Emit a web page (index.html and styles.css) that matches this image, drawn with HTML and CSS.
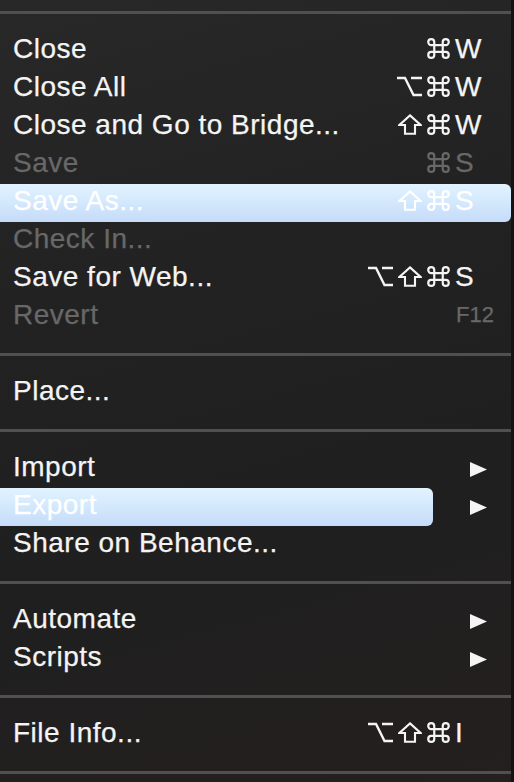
FILE: index.html
```html
<!DOCTYPE html>
<html>
<head>
<meta charset="utf-8">
<link rel="stylesheet" href="styles.css">
</head>
<body>
<svg class="defs" width="0" height="0" aria-hidden="true">
  <defs>
    <symbol id="cmd" viewBox="0 0 23 21">
      <path d="M7.25 4.1V16.9M15.75 4.1V16.9M4.25 7.1H18.75M4.25 13.9H18.75M7.25 4.1A3 3 0 1 0 4.25 7.1M15.75 4.1A3 3 0 1 1 18.75 7.1M4.25 13.9A3 3 0 1 0 7.25 16.9M18.75 13.9A3 3 0 1 1 15.75 16.9" fill="none" stroke="currentColor" stroke-width="2.2"/>
    </symbol>
    <symbol id="opt" viewBox="0 0 25 21">
      <path d="M0 2H8L16.5 19H25M14 2H25" fill="none" stroke="currentColor" stroke-width="2.4"/>
    </symbol>
    <symbol id="shift" viewBox="0 0 24 21">
      <path d="M12 1.4L22.6 11H17V19.8H7V11H1.4Z" fill="none" stroke="currentColor" stroke-width="2.1" stroke-linejoin="miter"/>
    </symbol>
    <symbol id="tri" viewBox="0 0 17 15">
      <path d="M0 0L17 7.5L0 15Z" fill="currentColor"/>
    </symbol>
  </defs>
</svg>
<div class="menu">
  <div class="sep first"><div class="line"></div></div>
  <div class="item"><span class="label">Close</span><span class="mods" aria-label="Command"><svg class="g cmd"><use href="#cmd"/></svg></span><span class="key">W</span></div>
  <div class="item"><span class="label">Close All</span><span class="mods" aria-label="Option Command"><svg class="g opt"><use href="#opt"/></svg><svg class="g cmd"><use href="#cmd"/></svg></span><span class="key">W</span></div>
  <div class="item"><span class="label">Close and Go to Bridge...</span><span class="mods" aria-label="Shift Command"><svg class="g shift"><use href="#shift"/></svg><svg class="g cmd"><use href="#cmd"/></svg></span><span class="key">W</span></div>
  <div class="item disabled"><span class="label">Save</span><span class="mods" aria-label="Command"><svg class="g cmd"><use href="#cmd"/></svg></span><span class="key">S</span></div>
  <div class="item selected"><span class="label">Save As...</span><span class="mods" aria-label="Shift Command"><svg class="g shift"><use href="#shift"/></svg><svg class="g cmd"><use href="#cmd"/></svg></span><span class="key">S</span></div>
  <div class="item disabled"><span class="label">Check In...</span></div>
  <div class="item"><span class="label">Save for Web...</span><span class="mods" aria-label="Option Shift Command"><svg class="g opt"><use href="#opt"/></svg><svg class="g shift"><use href="#shift"/></svg><svg class="g cmd"><use href="#cmd"/></svg></span><span class="key">S</span></div>
  <div class="item disabled"><span class="label">Revert</span><span class="mods"></span><span class="key fkey">F12</span></div>
  <div class="sep"><div class="line"></div></div>
  <div class="item"><span class="label">Place...</span></div>
  <div class="sep"><div class="line"></div></div>
  <div class="item"><span class="label">Import</span><span class="sub"><svg class="tri"><use href="#tri"/></svg></span></div>
  <div class="item sub-selected"><span class="label">Export</span><span class="sub"><svg class="tri"><use href="#tri"/></svg></span></div>
  <div class="item"><span class="label">Share on Behance...</span></div>
  <div class="sep"><div class="line"></div></div>
  <div class="item"><span class="label">Automate</span><span class="sub"><svg class="tri"><use href="#tri"/></svg></span></div>
  <div class="item"><span class="label">Scripts</span><span class="sub"><svg class="tri"><use href="#tri"/></svg></span></div>
  <div class="sep"><div class="line"></div></div>
  <div class="item"><span class="label">File Info...</span><span class="mods" aria-label="Option Shift Command"><svg class="g opt"><use href="#opt"/></svg><svg class="g shift"><use href="#shift"/></svg><svg class="g cmd"><use href="#cmd"/></svg></span><span class="key">I</span></div>
  <div class="sep"><div class="line"></div></div>
</div>
</body>
</html>
```

FILE: styles.css
```css
html, body {
  margin: 0;
  padding: 0;
  background: #1c1a1a;
}

.defs {
  position: absolute;
  width: 0;
  height: 0;
  overflow: hidden;
}

.menu {
  width: 511px;
  height: 782px;
  overflow: hidden;
  border-right: 3px solid #141212;
  background: linear-gradient(165deg, #282828 0%, #222222 35%, #1f1f1f 65%, #251f1f 100%);
  font-family: "Liberation Sans", Arial, sans-serif;
  color: #f4f4f4;
}

.sep {
  padding: 17px 0 18px;
}

.sep.first {
  padding-top: 11px;
}

.line {
  height: 3px;
  background: #505050;
}

.item {
  display: flex;
  height: 38px;
  box-sizing: border-box;
  padding-bottom: 4px;
  font-size: 28px;
  line-height: 34px;
  letter-spacing: 0.5px;
  white-space: nowrap;
  -webkit-text-stroke: 0.25px currentColor;
}

.label {
  flex: 1;
  padding-left: 13px;
}

.mods {
  display: flex;
  justify-content: flex-end;
  align-items: flex-start;
  gap: 5px;
  padding-top: 6px;
  padding-right: 5px;
}

.g {
  display: block;
  height: 21px;
}

.g.cmd { width: 23px; }
.g.opt { width: 25px; }
.g.shift { width: 24px; }

.key {
  width: 56px;
  letter-spacing: 0;
}

.fkey {
  font-size: 22px;
  padding-left: 1px;
  box-sizing: border-box;
}

.disabled {
  color: #686868;
}

.selected {
  background: linear-gradient(180deg, #e2f3ff 0%, #d3e8fd 50%, #c5dbf8 100%);
  border-radius: 0 6px 6px 0;
  color: #ffffff;
}

.sub {
  width: 78px;
  display: flex;
  align-items: center;
  padding-top: 4px;
  box-sizing: border-box;
}

.tri {
  display: block;
  margin-left: 37px;
  width: 17px;
  height: 15px;
  color: #f4f4f4;
}

.sub-selected .label {
  background: linear-gradient(180deg, #e2f3ff 0%, #d3e8fd 50%, #c5dbf8 100%);
  border-radius: 0 6px 6px 0;
  color: #ffffff;
  margin-bottom: -4px;
  padding-bottom: 4px;
}
```
